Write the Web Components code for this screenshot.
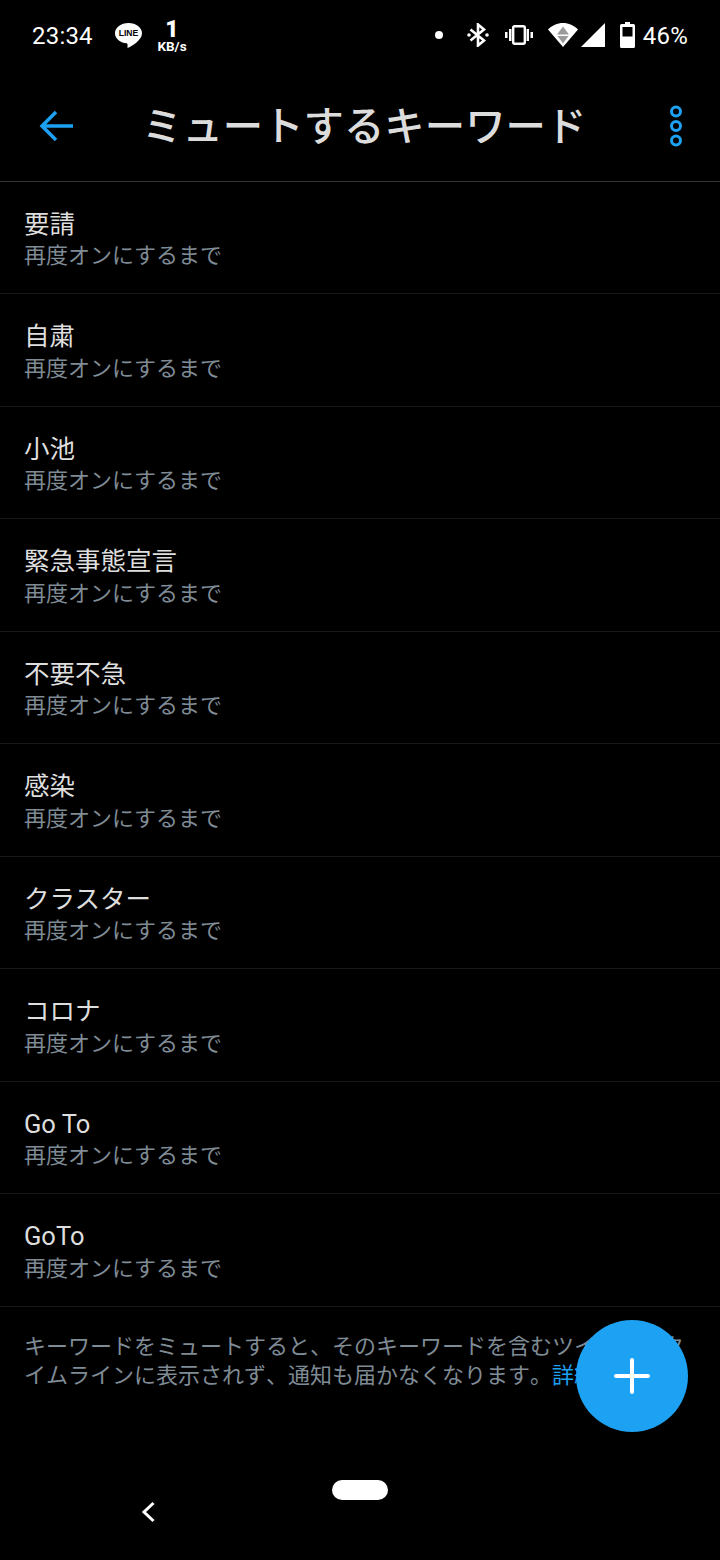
<!DOCTYPE html>
<html lang="ja">
<head>
<meta charset="utf-8">
<title>ミュートするキーワード</title>
<style>
html, body { margin: 0; padding: 0; background: #000; }
body { width: 720px; height: 1560px; overflow: hidden; position: relative; font-family: "Noto Sans CJK JP", "Noto Sans", sans-serif; text-spacing-trim: space-all; font-kerning: none; }
</style>
</head>
<body>
<status-bar></status-bar>
<app-header>ミュートするキーワード</app-header>
<keyword-list>
  <keyword-row>要請</keyword-row>
  <keyword-row>自粛</keyword-row>
  <keyword-row>小池</keyword-row>
  <keyword-row>緊急事態宣言</keyword-row>
  <keyword-row>不要不急</keyword-row>
  <keyword-row>感染</keyword-row>
  <keyword-row>クラスター</keyword-row>
  <keyword-row>コロナ</keyword-row>
  <keyword-row>Go To</keyword-row>
  <keyword-row>GoTo</keyword-row>
</keyword-list>
<foot-note>キーワードをミュートすると、そのキーワードを含むツイートがタイムラインに表示されず、通知も届かなくなります。<a>詳細情報</a></foot-note>
<add-button></add-button>
<nav-bar></nav-bar>

<script>
// status bar along the top
class StatusBar extends HTMLElement {
    constructor() {
        super();
        this.attachShadow({ mode: "open" });
        this.shadowRoot.innerHTML = `
<style>
:host {
    display: flex;
    align-items: center;
    height: 70px;
    padding: 0 32px;
    color: #fff;
    font-family: Roboto, "Liberation Sans", sans-serif;
}
.time { font-size: 24px; letter-spacing: 0.2px; width: 82px; margin-top: 1px; }
.net { display: flex; flex-direction: column; align-items: center; width: 32px; margin-left: 12px; font-weight: 700; line-height: 1; margin-top: 2px; }
.net b { font-size: 23px; height: 20px; line-height: 20px; }
.net span { font-size: 13.500px; line-height: 13px; }
.spacer { flex: 1; }
.right { display: flex; align-items: center; }
svg { display: block; }
.pct { font-size: 24px; letter-spacing: 0.2px; margin-left: 8px; margin-top: 1px; }
.line { position: relative; width: 30px; height: 28px; }
.line i { position: absolute; left: 1px; top: 8px; width: 27px; font: 900 8.500px "Liberation Sans", sans-serif; line-height: 9px; color: #000; text-align: center; }
</style>
<span class="time">23:34</span>
<span class="line">
  <svg width="30" height="28" viewBox="0 0 30 28"><path fill="#fff" d="M14.500 2C7 2 1 6.500 1 12.200 1 17.500 6 21.600 12.500 22.300 13.500 22.500 13.800 23.500 13.500 27 17.500 25 28 19.500 28 12.200 28 6.500 22 2 14.500 2Z"/></svg>
  <i>LINE</i>
</span>
<span class="net"><b>1</b><span>KB/s</span></span>
<span class="spacer"></span>
<span class="right">
  <svg width="10" height="10" viewBox="0 0 10 10" style="margin-right:23px"><circle cx="5" cy="5" r="4" fill="#fff"/></svg>
  <svg width="22" height="24" viewBox="0 0 22 24" style="margin-right:16px"><path fill="none" stroke="#fff" stroke-width="2.600" d="M3.500 6.500 17 17.500 11 22.500V1.500L17 6.500 3.500 17.500"/><circle cx="2" cy="12" r="1.800" fill="#fff"/><circle cx="20" cy="12" r="1.800" fill="#fff"/></svg>
  <svg width="28" height="20" viewBox="0 0 28 20" style="margin-right:15px"><rect x="8.200" y="1.200" width="11.600" height="17.600" rx="1.500" fill="none" stroke="#fff" stroke-width="2.400"/><path fill="#fff" d="M4 4h2.500v12H4zM0 7h2.500v6H0zM21.500 4H24v12h-2.500zM25.500 7H28v6h-2.500z"/></svg>
  <svg width="30" height="24" viewBox="0 0 30 24" style="margin-right:3px"><path fill="#fff" d="M15 24 0 6.500C4 2.500 9.300 0 15 0S26 2.500 30 6.500Z"/><path fill="#9a9a9a" d="M15 3.500 21 11.500H9ZM9.500 13H20.500L15 20.500Z"/></svg>
  <svg width="24" height="24" viewBox="0 0 24 24"><path fill="#fff" d="M24 0V24H0Z"/></svg>
  <svg width="15" height="26" viewBox="0 0 15 26" style="margin-left:15px"><path fill="#fff" d="M5 0h5v2h3.500A1.500 1.500 0 0 1 15 3.500V24.500A1.500 1.500 0 0 1 13.500 26H1.500A1.500 1.500 0 0 1 0 24.500V3.500A1.500 1.500 0 0 1 1.500 2H5Z"/><rect x="2.500" y="5" width="10" height="9.500" fill="#000"/></svg>
  <span class="pct">46%</span>
</span>`;
    }
}

// title bar with back arrow and overflow menu
class AppHeader extends HTMLElement {
    constructor() {
        super();
        this.attachShadow({ mode: "open" });
        this.shadowRoot.innerHTML = `
<style>
:host {
    display: flex;
    align-items: center;
    box-sizing: border-box;
    height: 112px;
    border-bottom: 1px solid #333538;
}
.back { width: 142px; padding-left: 39px; box-sizing: border-box; }
.title { flex: 1; font-size: 40.400px; font-weight: 500; color: #dcdcdc; white-space: nowrap; line-height: 1; margin-top: -2px; }
.more { width: 51px; }
svg { display: block; }
</style>
<div class="back"><svg width="34" height="32" viewBox="0 0 34 32"><path fill="none" stroke="#1da1f2" stroke-width="3.500" d="M34 16H3M17 2 3 16 17 30"/></svg></div>
<div class="title"><slot></slot></div>
<div class="more"><svg width="14" height="44" viewBox="0 0 14 44"><g fill="none" stroke="#1da1f2" stroke-width="3"><circle cx="7" cy="7.500" r="4.500"/><circle cx="7" cy="22" r="4.500"/><circle cx="7" cy="36.500" r="4.500"/></g></svg></div>`;
    }
}

class KeywordList extends HTMLElement {
    constructor() {
        super();
        this.attachShadow({ mode: "open" });
        // half pixel up so the row lines round the same way as the reference
        this.shadowRoot.innerHTML = `<style>:host { display: block; margin-top: -0.5px; }</style><slot></slot>`;
    }
}

class KeywordRow extends HTMLElement {
    constructor() {
        super();
        this.attachShadow({ mode: "open" });
        this.shadowRoot.innerHTML = `
<style>
:host {
    display: flex;
    flex-direction: column;
    justify-content: center;
    box-sizing: border-box;
    height: 112.5px;
    padding: 0 24px;
    border-bottom: 1px solid #16181c;
}
.name { font-family: Roboto, "Noto Sans CJK JP", sans-serif; font-kerning: normal; font-size: 25.500px; line-height: 32px; color: #dedede; margin-top: 2.500px; margin-bottom: -2.500px; }
.sub { font-size: 22px; line-height: 32px; color: #7f8b95; }
</style>
<div class="name"><slot></slot></div>
<div class="sub">再度オンにするまで</div>`;
    }
}

class FootNote extends HTMLElement {
    constructor() {
        super();
        this.attachShadow({ mode: "open" });
        this.shadowRoot.innerHTML = `
<style>
:host {
    display: block;
    padding: 23px 36px 0 24px;
    font-size: 22px;
    line-height: 29.500px;
    color: #7f8b95;
}
::slotted(a) { color: #1da1f2; }
</style>
<slot></slot>`;
    }
}

// floating round button, sits over the foot note
class AddButton extends HTMLElement {
    constructor() {
        super();
        this.attachShadow({ mode: "open" });
        this.shadowRoot.innerHTML = `
<style>
:host {
    position: absolute;
    left: 576px;
    top: 1320px;
    width: 112px;
    height: 112px;
    border-radius: 50%;
    background: #1da1f2;
    display: flex;
    align-items: center;
    justify-content: center;
}
svg { display: block; }
</style>
<svg width="36" height="36" viewBox="0 0 36 36"><path stroke="#fff" stroke-width="4" stroke-linecap="round" fill="none" d="M18 2V34M2 18H34"/></svg>`;
    }
}

// gesture pill and back chevron at the bottom of the screen
class NavBar extends HTMLElement {
    constructor() {
        super();
        this.attachShadow({ mode: "open" });
        this.shadowRoot.innerHTML = `
<style>
:host {
    position: absolute;
    left: 0;
    right: 0;
    top: 1480px;
    height: 80px;
    display: block;
}
.pill { position: absolute; left: 332px; top: 0; width: 56px; height: 20px; border-radius: 10px; background: #fff; }
svg { position: absolute; left: 141px; top: 21px; display: block; }
</style>
<div class="pill"></div>
<svg width="14" height="22" viewBox="0 0 14 22"><path fill="none" stroke="#fff" stroke-width="3" d="M12.500 2 3 11 12.500 20"/></svg>`;
    }
}

customElements.define("status-bar", StatusBar);
customElements.define("app-header", AppHeader);
customElements.define("keyword-list", KeywordList);
customElements.define("keyword-row", KeywordRow);
customElements.define("foot-note", FootNote);
customElements.define("add-button", AddButton);
customElements.define("nav-bar", NavBar);
</script>
</body>
</html>
